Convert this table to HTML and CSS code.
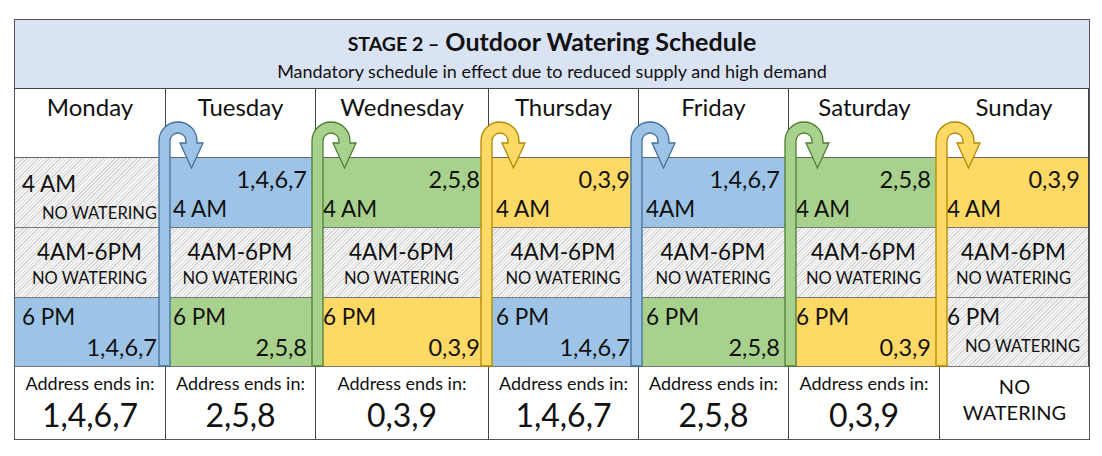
FILE: index.html
```html
<!DOCTYPE html>
<html lang="en">
<head>
<meta charset="utf-8">
<title>Stage 2 – Outdoor Watering Schedule</title>
<link rel="stylesheet" href="styles.css">
</head>
<body>
<div class="page">
  <div class="sched">
    <div class="head">
      <div class="title"><span class="stage">STAGE 2 –</span> Outdoor Watering Schedule</div>
      <div class="sub">Mandatory schedule in effect due to reduced supply and high demand</div>
    </div>

    <div class="day">Monday</div>
    <div class="day">Tuesday</div>
    <div class="day">Wednesday</div>
    <div class="day">Thursday</div>
    <div class="day">Friday</div>
    <div class="day">Saturday</div>
    <div class="day">Sunday</div>

    <div class="cell r1 hatch off"><span class="t l">4 AM</span><span class="nw r">NO WATERING</span></div>
    <div class="cell r1 blue"><span class="n r">1,4,6,7</span><span class="t l">4 AM</span></div>
    <div class="cell r1 green"><span class="n r">2,5,8</span><span class="t l">4 AM</span></div>
    <div class="cell r1 yellow"><span class="n r">0,3,9</span><span class="t l">4 AM</span></div>
    <div class="cell r1 blue"><span class="n r">1,4,6,7</span><span class="t l">4AM</span></div>
    <div class="cell r1 green"><span class="n r">2,5,8</span><span class="t l">4 AM</span></div>
    <div class="cell r1 yellow"><span class="n r">0,3,9</span><span class="t l">4 AM</span></div>

    <div class="cell r2 hatch"><span class="t">4AM-6PM</span><span class="nw">NO WATERING</span></div>
    <div class="cell r2 hatch"><span class="t">4AM-6PM</span><span class="nw">NO WATERING</span></div>
    <div class="cell r2 hatch"><span class="t">4AM-6PM</span><span class="nw">NO WATERING</span></div>
    <div class="cell r2 hatch"><span class="t">4AM-6PM</span><span class="nw">NO WATERING</span></div>
    <div class="cell r2 hatch"><span class="t">4AM-6PM</span><span class="nw">NO WATERING</span></div>
    <div class="cell r2 hatch"><span class="t">4AM-6PM</span><span class="nw">NO WATERING</span></div>
    <div class="cell r2 hatch"><span class="t">4AM-6PM</span><span class="nw">NO WATERING</span></div>

    <div class="cell r3 blue"><span class="t l">6 PM</span><span class="n r">1,4,6,7</span></div>
    <div class="cell r3 green"><span class="t l">6 PM</span><span class="n r">2,5,8</span></div>
    <div class="cell r3 yellow"><span class="t l">6 PM</span><span class="n r">0,3,9</span></div>
    <div class="cell r3 blue"><span class="t l">6 PM</span><span class="n r">1,4,6,7</span></div>
    <div class="cell r3 green"><span class="t l">6 PM</span><span class="n r">2,5,8</span></div>
    <div class="cell r3 yellow"><span class="t l">6 PM</span><span class="n r">0,3,9</span></div>
    <div class="cell r3 hatch off"><span class="t l">6 PM</span><span class="nw r">NO WATERING</span></div>

    <div class="addr"><span class="lab">Address ends in:</span><span class="big">1,4,6,7</span></div>
    <div class="addr"><span class="lab">Address ends in:</span><span class="big">2,5,8</span></div>
    <div class="addr"><span class="lab">Address ends in:</span><span class="big">0,3,9</span></div>
    <div class="addr"><span class="lab">Address ends in:</span><span class="big">1,4,6,7</span></div>
    <div class="addr"><span class="lab">Address ends in:</span><span class="big">2,5,8</span></div>
    <div class="addr"><span class="lab">Address ends in:</span><span class="big">0,3,9</span></div>
    <div class="addr none"><span>NO</span><span>WATERING</span></div>

    <svg class="arrow a1 ablue" viewBox="0 0 50 248" width="50" height="248"><path d="M2,246 L2,21 A19,19 0 0 1 40,21 L40,23 L46,23 L34.5,48 L23,23 L29,23 L29,21 A8,8 0 0 0 13,21 L13,246 Z"/></svg>
    <svg class="arrow a2 agreen" viewBox="0 0 50 248" width="50" height="248"><path d="M2,246 L2,21 A19,19 0 0 1 40,21 L40,23 L46,23 L34.5,48 L23,23 L29,23 L29,21 A8,8 0 0 0 13,21 L13,246 Z"/></svg>
    <svg class="arrow a3 ayellow" viewBox="0 0 50 248" width="50" height="248"><path d="M2,246 L2,21 A19,19 0 0 1 40,21 L40,23 L46,23 L34.5,48 L23,23 L29,23 L29,21 A8,8 0 0 0 13,21 L13,246 Z"/></svg>
    <svg class="arrow a4 ablue" viewBox="0 0 50 248" width="50" height="248"><path d="M2,246 L2,21 A19,19 0 0 1 40,21 L40,23 L46,23 L34.5,48 L23,23 L29,23 L29,21 A8,8 0 0 0 13,21 L13,246 Z"/></svg>
    <svg class="arrow a5 agreen" viewBox="0 0 50 248" width="50" height="248"><path d="M2,246 L2,21 A19,19 0 0 1 40,21 L40,23 L46,23 L34.5,48 L23,23 L29,23 L29,21 A8,8 0 0 0 13,21 L13,246 Z"/></svg>
    <svg class="arrow a6 ayellow" viewBox="0 0 50 248" width="50" height="248"><path d="M2,246 L2,21 A19,19 0 0 1 40,21 L40,23 L46,23 L34.5,48 L23,23 L29,23 L29,21 A8,8 0 0 0 13,21 L13,246 Z"/></svg>
  </div>
</div>
</body>
</html>
```

FILE: styles.css
```css
* { box-sizing: border-box; }
html, body { margin: 0; padding: 0; background: #fff; }
body {
  font-family: Lato, "Open Sans", "Liberation Sans", sans-serif;
  color: #111;
}
.page { padding: 19px 0 0 14px; }

.sched {
  position: relative;
  width: 1076px;
  border: 1px solid #555;
  display: grid;
  grid-template-columns: 151px 150px 173px 150px 150px 151px 149px;
  grid-template-rows: 69px 69px 70px 70px 69px 72px;
}

.head {
  grid-column: 1 / -1;
  background: #dae3f3;
  border-bottom: 1px solid #444;
  text-align: center;
  padding-top: 6px;
}
.title {
  font-weight: 700;
  font-size: 25px;
  line-height: 30px;
}
.stage { font-size: 19.5px; }
.sub {
  font-size: 18px;
  line-height: 24px;
}

.day, .cell, .addr {
  border-right: 1px solid #444;
}

.day {
  border-bottom: 1px solid #666;
  font-size: 24px;
  line-height: 30px;
  text-align: center;
  padding-top: 3px;
}
.day:nth-of-type(7) { border-right: 0; }

.cell {
  display: flex;
  flex-direction: column;
  justify-content: space-between;
  border-bottom: 1px solid #777;
  padding: 8px 8px 5px 7px;
}
.r1.off { padding-top: 12px; padding-bottom: 4px; }
.r2 { align-items: center; justify-content: flex-start; padding-top: 10px; }
.r3 { padding: 5px 8px 5px 7px; }
.r3.off { padding-bottom: 10px; }

.blue { background: #9dc3e6; }
.green { background: #a9d18e; }
.yellow { background: #ffd966; }
.hatch {
  background-color: #f7f7f7;
  background-image: repeating-linear-gradient(-45deg, #d4d4d4 0 1px, transparent 1px 2.6px);
}

.l { align-self: flex-start; }
.r { align-self: flex-end; }
.t { font-size: 22.5px; line-height: 27px; }
.n { font-size: 23.5px; line-height: 27px; }
.nw { font-size: 16.5px; line-height: 20px; }
.r2 .nw { margin-top: 3px; }

.addr {
  display: flex;
  flex-direction: column;
  align-items: center;
  padding-top: 5px;
}
.lab { font-size: 18px; line-height: 23px; }
.big { font-size: 32px; line-height: 40px; }
.addr.none { font-size: 20px; line-height: 26px; padding-top: 6px; border-right: 0; }

.arrow {
  position: absolute;
  top: 100px;
  overflow: visible;
}
.arrow path { stroke-width: 1.3; stroke-linejoin: miter; }
.ablue path { fill: #9dc3e6; stroke: #41719c; }
.agreen path { fill: #a9d18e; stroke: #507e32; }
.ayellow path { fill: #ffd966; stroke: #b08900; }
.a1 { left: 142px; }
.a2 { left: 295px; }
.a3 { left: 464px; }
.a4 { left: 614px; }
.a5 { left: 768px; }
.a6 { left: 919px; }
```
